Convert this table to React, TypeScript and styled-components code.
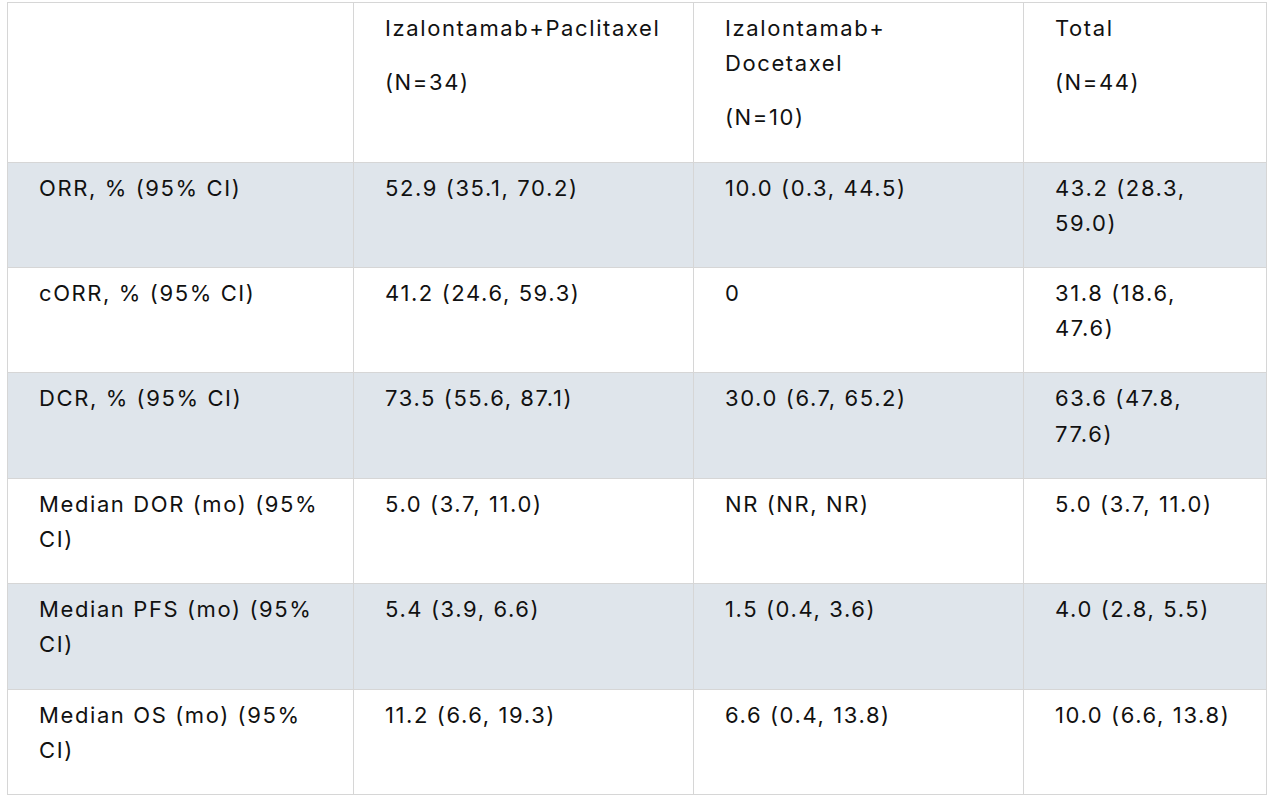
import React from "react";
import styled, { createGlobalStyle } from "styled-components";

const Global = createGlobalStyle`
  html, body { margin: 0; padding: 0; background: #ffffff; }
  body { font-family: Inter, "Noto Sans", sans-serif; color: #111111; }
`;

const Page = styled.div`
  padding: 2px 0 0 7px;
`;

const Table = styled.table`
  border-collapse: collapse;
  table-layout: fixed;
  width: 1259px;
  font-size: 22px;
  line-height: 35.2px;
  letter-spacing: 1.6px;
`;

const Row = styled.tr<{ $shaded?: boolean }>`
  background: ${(p) => (p.$shaded ? "#dfe5eb" : "#ffffff")};
`;

const Cell = styled.td`
  border: 1px solid #d6d6d6;
  padding: 8px 26px 7px 31px;
  vertical-align: top;
  text-align: left;
  font-weight: 400;
`;

const Para = styled.p`
  margin: 0 0 19px 0;
`;

const cols = [346, 340, 330, 243];

const header = [
  [],
  ["Izalontamab+Paclitaxel", "(N=34)"],
  ["Izalontamab+ Docetaxel", "(N=10)"],
  ["Total", "(N=44)"],
];

const rows = [
  ["ORR, % (95% CI)", "52.9 (35.1, 70.2)", "10.0 (0.3, 44.5)", "43.2 (28.3, 59.0)"],
  ["cORR, % (95% CI)", "41.2 (24.6, 59.3)", "0", "31.8 (18.6, 47.6)"],
  ["DCR, % (95% CI)", "73.5 (55.6, 87.1)", "30.0 (6.7, 65.2)", "63.6 (47.8, 77.6)"],
  ["Median DOR (mo) (95% CI)", "5.0 (3.7, 11.0)", "NR (NR, NR)", "5.0 (3.7, 11.0)"],
  ["Median PFS (mo) (95% CI)", "5.4 (3.9, 6.6)", "1.5 (0.4, 3.6)", "4.0 (2.8, 5.5)"],
  ["Median OS (mo) (95% CI)", "11.2 (6.6, 19.3)", "6.6 (0.4, 13.8)", "10.0 (6.6, 13.8)"],
];

export default function App() {
  return (
    <Page>
      <Global />
      <Table>
        <colgroup>
          {cols.map((w, i) => (
            <col key={i} style={{ width: w }} />
          ))}
        </colgroup>
        <thead>
          <Row>
            {header.map((h, i) => (
              <Cell as="th" key={i}>
                {h.map((t, j) => (
                  <Para key={j}>{t}</Para>
                ))}
              </Cell>
            ))}
          </Row>
        </thead>
        <tbody>
          {rows.map((r, i) => (
            <Row key={i} $shaded={i % 2 === 0}>
              {r.map((t, j) => (
                <Cell key={j}>
                  <Para>{t}</Para>
                </Cell>
              ))}
            </Row>
          ))}
        </tbody>
      </Table>
    </Page>
  );
}
